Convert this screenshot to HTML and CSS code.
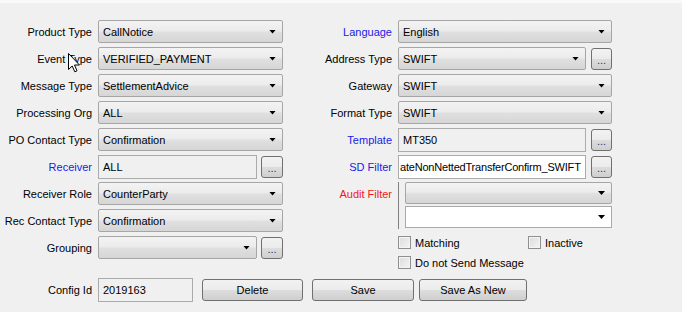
FILE: index.html
```html
<!DOCTYPE html>
<html lang="en">
<head>
    <meta charset="UTF-8">
    <title>Message Config</title>
<link rel="stylesheet" href="styles.css">
</head>
<body>
    <div class="topbar"></div>
    <div class="panel">
        <div class="form">
            <!-- row 1 -->
            <span class="lbl c1 r1">Product Type</span>
            <div class="combo c2 r1"><span>CallNotice</span><i class="arrow"></i></div>
            <span class="lbl c3 r1 blue">Language</span>
            <div class="combo c4 r1"><span>English</span><i class="arrow"></i></div>

            <!-- row 2 -->
            <span class="lbl c1 r2">Event Type</span>
            <div class="combo c2 r2"><span>VERIFIED_PAYMENT</span><i class="arrow"></i></div>
            <span class="lbl c3 r2">Address Type</span>
            <div class="pair c4 r2 wide">
                <div class="combo"><span>SWIFT</span><i class="arrow"></i></div>
                <div class="dots">...</div>
            </div>

            <!-- row 3 -->
            <span class="lbl c1 r3">Message Type</span>
            <div class="combo c2 r3"><span>SettlementAdvice</span><i class="arrow"></i></div>
            <span class="lbl c3 r3">Gateway</span>
            <div class="combo c4 r3"><span>SWIFT</span><i class="arrow"></i></div>

            <!-- row 4 -->
            <span class="lbl c1 r4">Processing Org</span>
            <div class="combo c2 r4"><span>ALL</span><i class="arrow"></i></div>
            <span class="lbl c3 r4">Format Type</span>
            <div class="combo c4 r4"><span>SWIFT</span><i class="arrow"></i></div>

            <!-- row 5 -->
            <span class="lbl c1 r5">PO Contact Type</span>
            <div class="combo c2 r5"><span>Confirmation</span><i class="arrow"></i></div>
            <span class="lbl c3 r5 blue">Template</span>
            <div class="pair c4 r5 wide">
                <div class="field">MT350</div>
                <div class="dots">...</div>
            </div>

            <!-- row 6 -->
            <span class="lbl c1 r6 blue">Receiver</span>
            <div class="pair c2 r6">
                <div class="field">ALL</div>
                <div class="dots">...</div>
            </div>
            <span class="lbl c3 r6 blue">SD Filter</span>
            <div class="pair c4 r6 wide">
                <div class="field white scrolled">ateNonNettedTransferConfirm_SWIFT</div>
                <div class="dots">...</div>
            </div>

            <!-- row 7 -->
            <span class="lbl c1 r7">Receiver Role</span>
            <div class="combo c2 r7"><span>CounterParty</span><i class="arrow"></i></div>
            <span class="lbl c3 r7 red">Audit Filter</span>
            <div class="audit c4">
                <div class="combo"><span></span><i class="arrow"></i></div>
                <div class="combo white"><span></span><i class="arrow"></i></div>
            </div>

            <!-- row 8 -->
            <span class="lbl c1 r8">Rec Contact Type</span>
            <div class="combo c2 r8"><span>Confirmation</span><i class="arrow"></i></div>

            <!-- row 9 -->
            <span class="lbl c1 r9">Grouping</span>
            <div class="pair c2 r9">
                <div class="combo"><span></span><i class="arrow"></i></div>
                <div class="dots">...</div>
            </div>
            <div class="checks c4">
                <div class="check-row">
                    <label class="check matching"><i class="box"></i>Matching</label>
                    <label class="check"><i class="box"></i>Inactive</label>
                </div>
                <div class="check-row">
                    <label class="check"><i class="box"></i>Do not Send Message</label>
                </div>
            </div>

            <!-- footer -->
            <div class="footer">
                <span class="lbl foot-lbl">Config Id</span>
                <div class="field id-field">2019163</div>
                <button class="btn delete">Delete</button>
                <button class="btn save">Save</button>
                <button class="btn save-new">Save As New</button>
            </div>
        </div>

        <svg class="cursor" width="13" height="20" viewBox="0 0 13 20">
            <path d="M0.5 0.5 L0.5 16.5 L4.2 13 L6.8 18.8 L9 17.8 L6.5 12 L11.5 12 Z" fill="#fff" stroke="#000" stroke-width="1"/>
        </svg>
    </div>
</body>
</html>
```

FILE: styles.css
```css
* {
    box-sizing: border-box;
}

body {
    margin: 0;
    background-color: #f0f0f0;
    font-family: "Liberation Sans", Arial, sans-serif;
    font-size: 11px;
    color: #000;
}

.topbar {
    height: 3px;
    background-color: #f9f9f9;
}

.panel {
    position: relative;
    padding-top: 17px;
}

.form {
    display: grid;
    grid-template-columns: 92px 185px 103px 214px;
    grid-template-rows: repeat(9, 23px) auto;
    column-gap: 6px;
    row-gap: 4px;
}

.c1 { grid-column: 1; }
.c2 { grid-column: 2; }
.c3 { grid-column: 3; }
.c4 { grid-column: 4; }
.r1 { grid-row: 1; }
.r2 { grid-row: 2; }
.r3 { grid-row: 3; }
.r4 { grid-row: 4; }
.r5 { grid-row: 5; }
.r6 { grid-row: 6; }
.r7 { grid-row: 7; }
.r8 { grid-row: 8; }
.r9 { grid-row: 9; }

.lbl {
    display: flex;
    align-items: center;
    justify-content: flex-end;
    white-space: nowrap;
}

.blue { color: #2020e8; }
.red { color: #f01818; }

.combo {
    display: flex;
    align-items: center;
    height: 23px;
    padding: 0 6px 0 4px;
    border: 1px solid #a6a6a6;
    border-radius: 2px;
    background: linear-gradient(to bottom, #f3f3f3 0%, #ececec 45%, #dfdfdf 55%, #d6d6d6 100%);
}

.combo span {
    flex: 1;
    white-space: nowrap;
    overflow: hidden;
}

.combo.white {
    background: #fff;
    border-radius: 0;
    border-color: #a9a9a9;
}

.arrow {
    width: 7px;
    height: 4px;
    background-color: #000;
    clip-path: polygon(0 0, 100% 0, 50% 100%);
}

.pair {
    display: flex;
    align-items: center;
    gap: 4px;
}

.pair.wide {
    gap: 5px;
}

.pair > .combo,
.pair > .field {
    flex: 1;
    min-width: 0;
}

.field {
    display: flex;
    align-items: center;
    height: 24px;
    padding: 0 4px;
    border: 1px solid #ababab;
    background-color: #f0f0f0;
    white-space: nowrap;
    overflow: hidden;
}

.field.white {
    background-color: #fff;
}

.field.scrolled {
    padding-left: 1px;
    letter-spacing: -0.2px;
}

.dots {
    flex: none;
    width: 22px;
    height: 22px;
    display: flex;
    align-items: flex-end;
    justify-content: center;
    padding-bottom: 3px;
    border: 1px solid #707070;
    border-radius: 3px;
    background: linear-gradient(to bottom, #f2f2f2 0%, #ebebeb 50%, #dddddd 50%, #cfcfcf 100%);
    font-size: 11px;
    line-height: 1;
    color: #1a3a7a;
}

.pair.wide .dots {
    width: 21px;
}

.audit {
    grid-row: 7 / span 2;
    display: flex;
    flex-direction: column;
    gap: 2px;
    height: 47px;
    border-left: 1px solid #808080;
    padding-left: 6px;
}

.audit .combo {
    height: 22px;
}

.checks {
    grid-row: 9;
    display: flex;
    flex-direction: column;
    gap: 7px;
}

.check-row {
    display: flex;
    height: 13px;
}

.check {
    display: flex;
    align-items: center;
    gap: 4px;
    white-space: nowrap;
}

.check.matching {
    width: 130px;
}

.box {
    width: 13px;
    height: 13px;
    border: 1px solid #8e8f8f;
    background: linear-gradient(135deg, #dcdcdc 0%, #f4f4f4 100%);
    box-shadow: inset 0 0 0 1px #f4f4f4;
}

.footer {
    grid-column: 1 / -1;
    grid-row: 10;
    display: flex;
    align-items: center;
    margin-top: 15px;
}

.foot-lbl {
    width: 92px;
    margin-right: 6px;
}

.id-field {
    width: 95px;
    margin-right: 9px;
}

.btn {
    height: 22px;
    padding: 0;
    border: 1px solid #707070;
    border-radius: 3px;
    background: linear-gradient(to bottom, #f2f2f2 0%, #ebebeb 50%, #dddddd 50%, #cfcfcf 100%);
    font-family: inherit;
    font-size: 11px;
    color: #000;
}

.delete { width: 101px; margin-right: 9px; }
.save { width: 102px; margin-right: 5px; }
.save-new { width: 108px; }

.cursor {
    position: absolute;
    left: 68px;
    top: 50px;
}
```
